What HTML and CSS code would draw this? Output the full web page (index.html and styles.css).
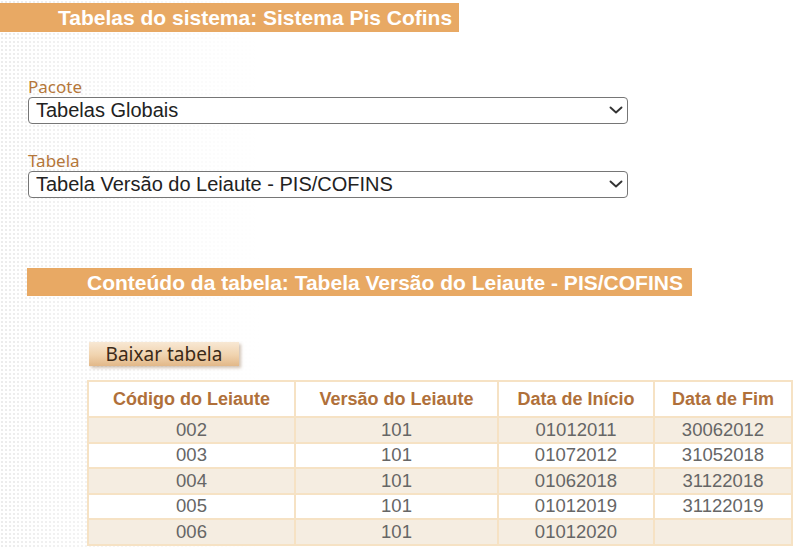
FILE: index.html
```html
<!DOCTYPE html>
<html lang="pt-BR">
<head>
<meta charset="utf-8">
<title>Tabelas do sistema</title>
<link rel="stylesheet" href="styles.css">
</head>
<body>
<div class="page">
  <h1 class="bar bar-main">Tabelas do sistema: Sistema Pis Cofins</h1>

  <form class="filters">
    <div class="field">
      <label class="field-label" for="pacote">Pacote</label>
      <div class="select-wrap">
        <select id="pacote" class="field-select">
          <option>Tabelas Globais</option>
        </select>
        <svg class="chev" width="14" height="8" viewBox="0 0 14 8" aria-hidden="true">
          <polyline points="1.5,1.5 7,6.5 12.5,1.5" fill="none" stroke="#333" stroke-width="1.9" stroke-linecap="round" stroke-linejoin="round"/>
        </svg>
      </div>
    </div>
    <div class="field">
      <label class="field-label" for="tabela">Tabela</label>
      <div class="select-wrap">
        <select id="tabela" class="field-select">
          <option>Tabela Versão do Leiaute - PIS/COFINS</option>
        </select>
        <svg class="chev" width="14" height="8" viewBox="0 0 14 8" aria-hidden="true">
          <polyline points="1.5,1.5 7,6.5 12.5,1.5" fill="none" stroke="#333" stroke-width="1.9" stroke-linecap="round" stroke-linejoin="round"/>
        </svg>
      </div>
    </div>
  </form>

  <h2 class="bar bar-sub">Conteúdo da tabela: Tabela Versão do Leiaute - PIS/COFINS</h2>

  <section class="content">
    <button type="button" class="btn-download">Baixar tabela</button>
    <table class="data">
      <colgroup>
        <col class="c1"><col class="c2"><col class="c3"><col class="c4">
      </colgroup>
      <thead>
        <tr>
          <th>Código do Leiaute</th>
          <th>Versão do Leiaute</th>
          <th>Data de Início</th>
          <th>Data de Fim</th>
        </tr>
      </thead>
      <tbody>
        <tr><td>002</td><td>101</td><td>01012011</td><td>30062012</td></tr>
        <tr><td>003</td><td>101</td><td>01072012</td><td>31052018</td></tr>
        <tr><td>004</td><td>101</td><td>01062018</td><td>31122018</td></tr>
        <tr><td>005</td><td>101</td><td>01012019</td><td>31122019</td></tr>
        <tr><td>006</td><td>101</td><td>01012020</td><td></td></tr>
      </tbody>
    </table>
  </section>
</div>
</body>
</html>
```

FILE: styles.css
```css
html, body {
  margin: 0;
  padding: 0;
}

body {
  font-family: "Liberation Sans", Arial, sans-serif;
  color: #222;
  /* dotted paper texture that fades out toward the right */
  background-color: #fff;
  background-image:
    linear-gradient(to right, rgba(255,255,255,0.3) 0, rgba(255,255,255,0.5) 60px, #fff 260px),
    radial-gradient(circle, #e4e4e4 0.9px, transparent 1.3px);
  background-size: 100% 100%, 4px 4px;
  min-height: 548px;
}

.page {
  padding-top: 3px;
  display: flex;
  flex-direction: column;
  align-items: flex-start;
}

.bar {
  margin: 0;
  background: #e8a964;
  color: #fff;
  font-weight: bold;
  font-size: 21px;
  white-space: nowrap;
}

.bar-main {
  height: 29px;
  line-height: 30px;
  padding: 0 7px 0 58px;
}

.filters {
  margin: 45px 0 0 28px;
  display: flex;
  flex-direction: column;
  gap: 27px;
}

.field {
  display: flex;
  flex-direction: column;
}

.field-label {
  font-family: "Noto Sans", "Open Sans", sans-serif;
  font-size: 17px;
  line-height: 20px;
  color: #b5773a;
}

.select-wrap {
  position: relative;
  width: 600px;
}

.field-select {
  display: block;
  width: 600px;
  height: 27px;
  -webkit-appearance: none;
  appearance: none;
  font-family: "Liberation Sans", Arial, sans-serif;
  font-size: 20px;
  line-height: 25px;
  color: #222;
  background: #fff;
  border: 1px solid #767676;
  border-radius: 4px;
  padding: 0 30px 0 7px;
}

/* dropdown arrow drawn over the select's right edge */
.chev {
  position: absolute;
  right: 5px;
  top: 9px;
  pointer-events: none;
}

.bar-sub {
  margin-top: 70px;
  margin-left: 27px;
  height: 28px;
  line-height: 29px;
  padding: 0 9px 0 60px;
}

.content {
  margin: 46px 0 0 87px;
  display: flex;
  flex-direction: column;
  align-items: flex-start;
}

.btn-download {
  margin-left: 2px;
  width: 150px;
  height: 24px;
  padding: 0;
  border: 0;
  font-family: "Noto Sans", "Open Sans", sans-serif;
  font-size: 19px;
  line-height: 24px;
  color: #3b2a18;
  background: linear-gradient(to bottom, #f8e8d4 0%, #f0d3ae 55%, #e2b888 100%);
  box-shadow: 2px 2px 3px rgba(120, 80, 40, 0.35);
}

.data {
  margin-top: 14px;
  width: 704px;
  border-collapse: collapse;
  border: 2px solid #f6e2c4;
  table-layout: fixed;
  font-size: 18.5px;
}

.c1 { width: 207px; }
.c2 { width: 203px; }
.c3 { width: 156px; }
.c4 { width: 138px; }

.data th,
.data td {
  border: 2px solid #f6e2c4;
  text-align: center;
  padding: 0;
}

.data th {
  height: 34px;
  font-size: 18px;
  font-weight: bold;
  color: #b0703a;
  background: #fff;
}

.data td {
  height: 23.5px;
  line-height: 22px;
  color: #666;
}

.data tbody tr:nth-child(odd) td {
  background: #f5ede1;
}

.data tbody tr:nth-child(even) td {
  background: #fff;
}
```
